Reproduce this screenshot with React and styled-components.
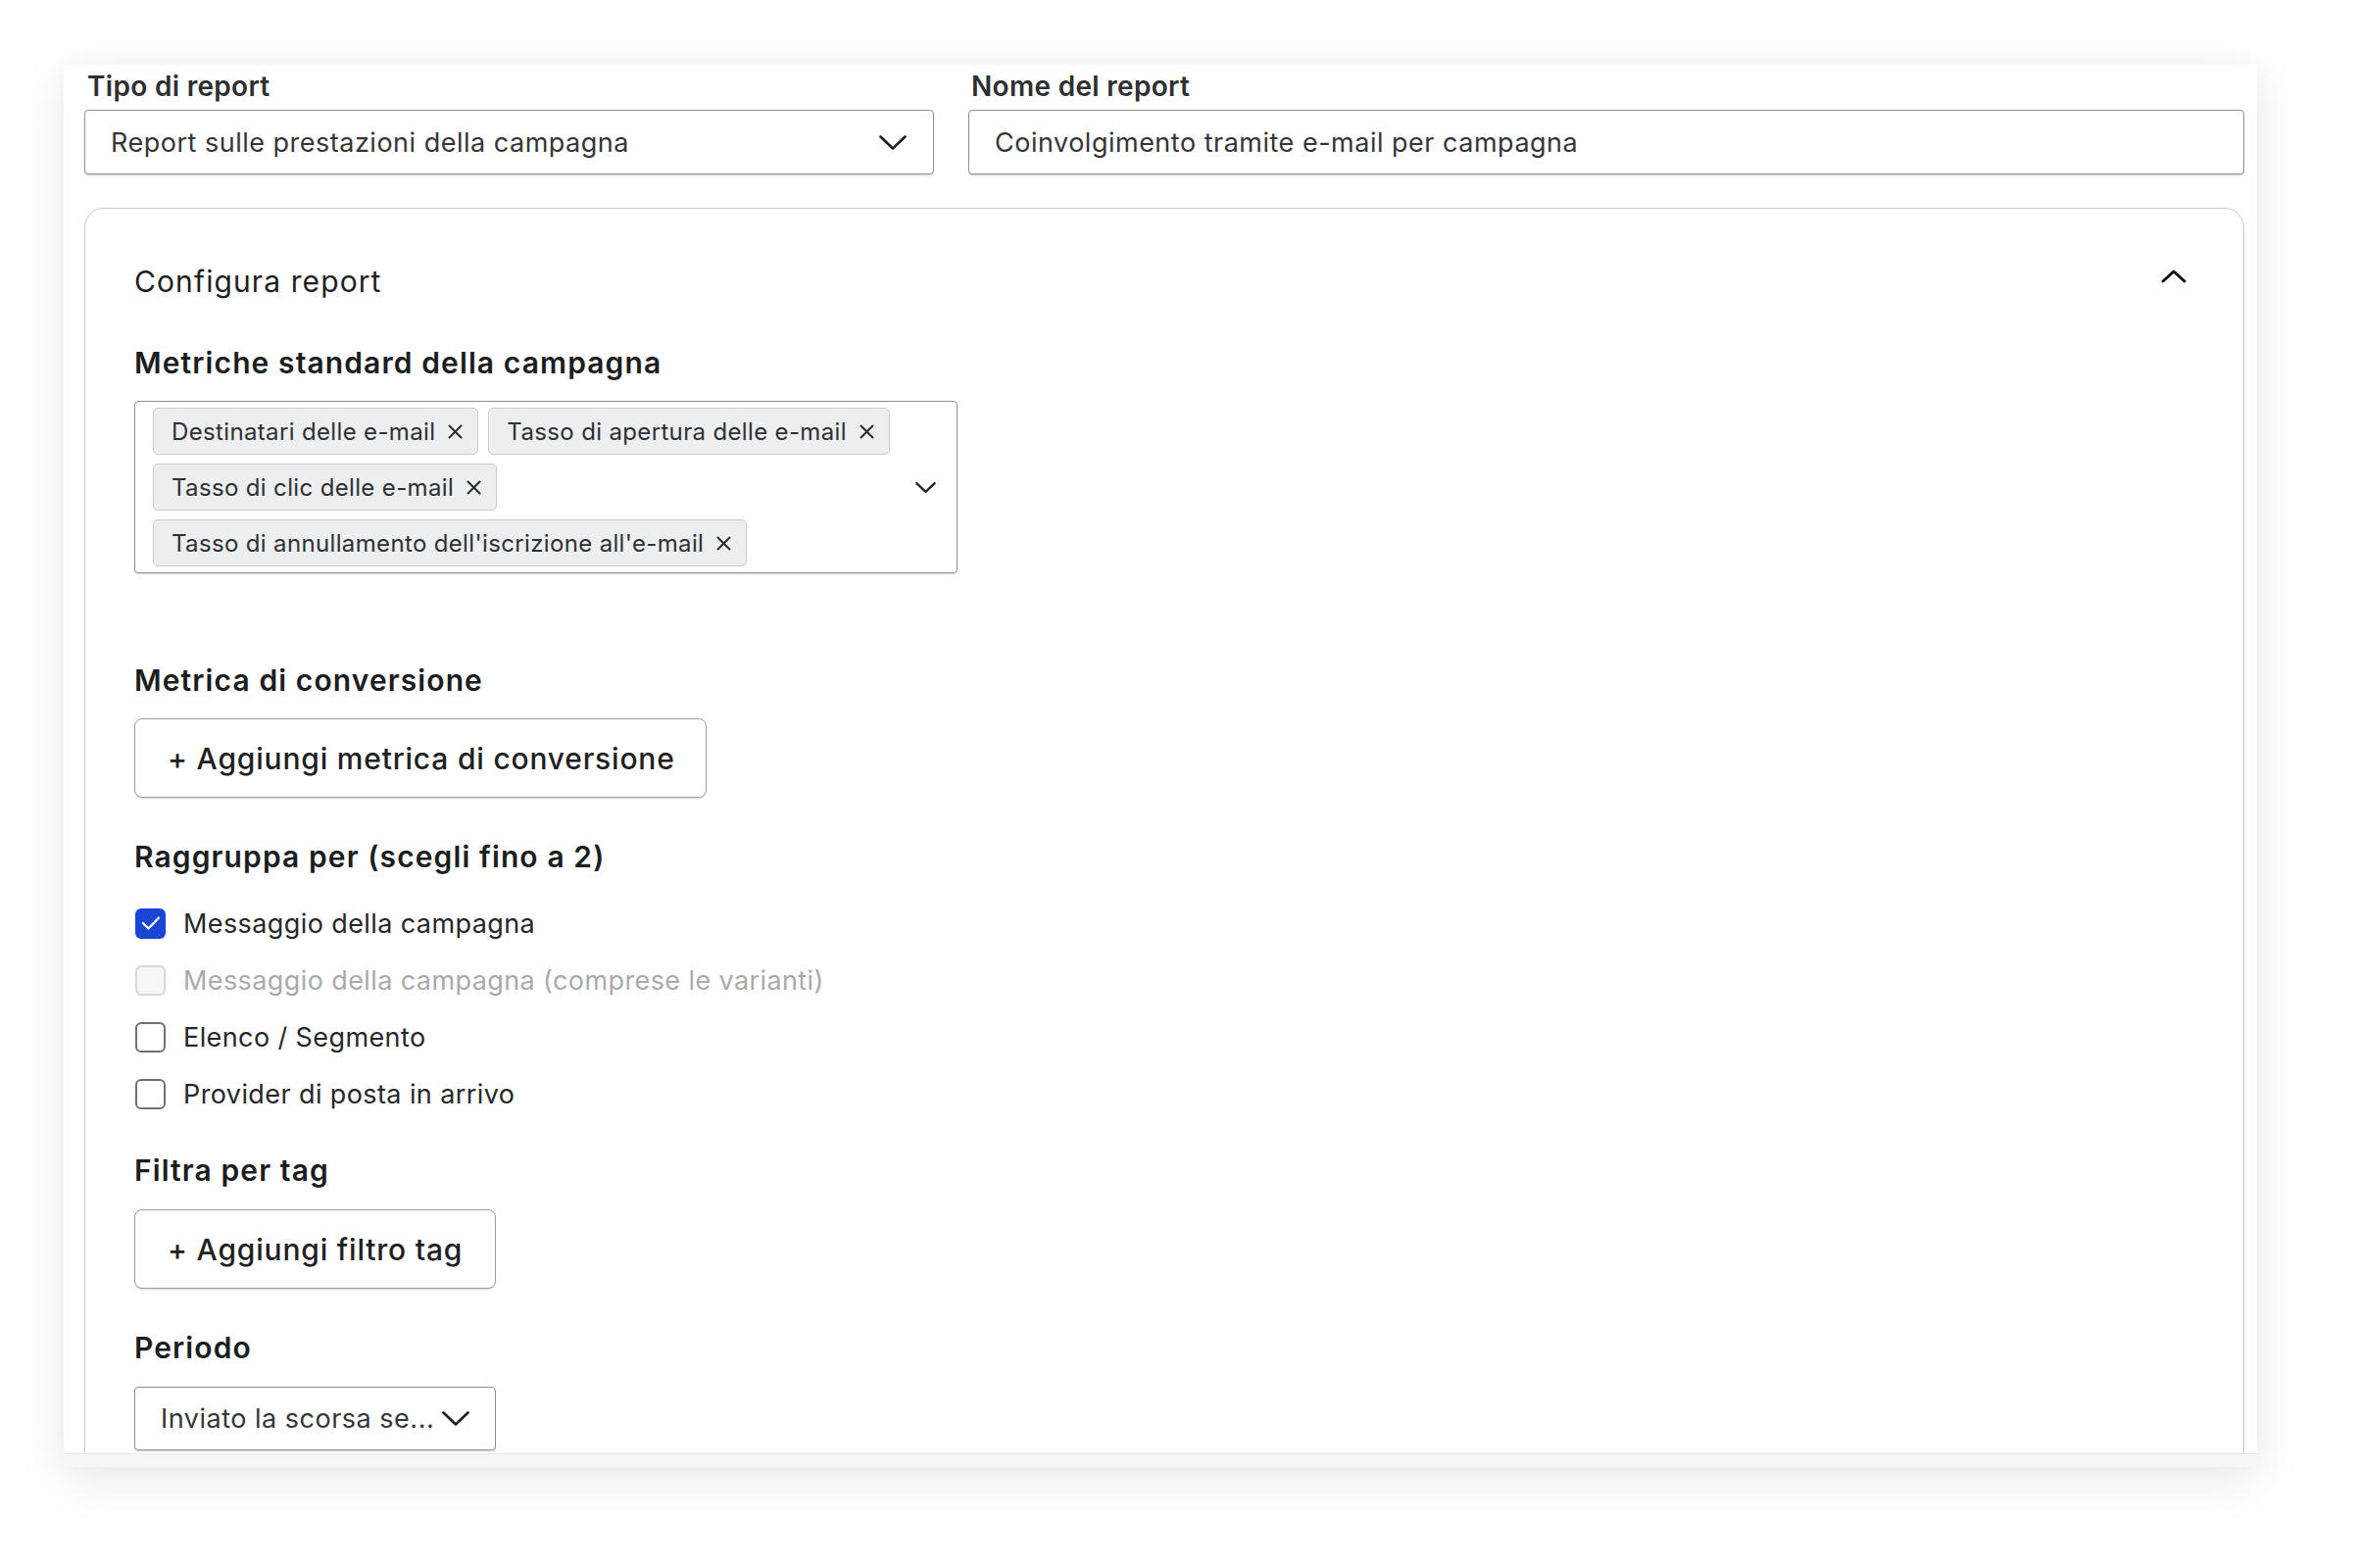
import React from "react";
import styled, { createGlobalStyle } from "styled-components";

const GlobalStyle = createGlobalStyle`
  html, body { margin: 0; padding: 0; background: #ffffff; }
  body { font-family: Inter, "Noto Sans", "Liberation Sans", sans-serif; color: #1f1f1f; }
  * { box-sizing: border-box; }
`;

const Page = styled.div`
  width: 2405px;
  height: 1600px;
  padding: 66px 0 0 65px;
  background: #ffffff;
`;

const Card = styled.div`
  width: 2238px;
  display: flex;
  flex-direction: column;
  background: #ffffff;
  box-shadow: 0 12px 48px rgba(0, 0, 0, 0.085), 0 0 18px rgba(0, 0, 0, 0.03);
`;

const CardBody = styled.div`
  height: 1417px;
  overflow: hidden;
  padding: 5px 13px 0 21px;
`;

const CardFooter = styled.div`
  height: 14px;
  background: #f4f6f7;
  border-top: 1px solid #e4e6e8;
`;

const TopRow = styled.div`
  display: grid;
  grid-template-columns: 867px 1fr;
  column-gap: 35px;
`;

const Field = styled.div`
  display: flex;
  flex-direction: column;
  gap: 7px;
`;

const FieldLabel = styled.label`
  font-size: 28px;
  line-height: 34px;
  font-weight: 600;
  letter-spacing: 0.3px;
  color: #2e2f31;
  padding-left: 3px;
`;

const Box = styled.div`
  height: ${(p) => p.$h || 66}px;
  width: ${(p) => (p.$w ? `${p.$w}px` : "auto")};
  margin-top: ${(p) => p.$mt || 0}px;
  border: 1.5px solid #8e8f91;
  border-radius: 4px;
  box-shadow: 0 1.5px 0 rgba(0, 0, 0, 0.13);
  display: flex;
  align-items: center;
  justify-content: space-between;
  padding: 0 ${(p) => p.$pr || 27}px 0 26px;
  font-size: 27px;
  letter-spacing: 0.5px;
  color: #353638;
  background: #fff;
  white-space: nowrap;
`;

const Panel = styled.div`
  margin-top: 34px;
  height: 1400px;
  border: 1.5px solid #c9cbce;
  border-radius: 20px;
  padding: 57px 57px 0 50px;
`;

const PanelHeader = styled.div`
  display: flex;
  justify-content: space-between;
  align-items: flex-start;
`;

const PanelTitle = styled.h2`
  margin: 0;
  font-size: 30px;
  line-height: 34px;
  font-weight: 400;
  letter-spacing: 1.1px;
  color: #1e1f21;
`;

const Toggle = styled.span`
  display: flex;
  padding-top: 5px;
  padding-right: 1px;
`;

const Heading = styled.h3`
  margin: ${(p) => p.$mt}px 0 0;
  font-size: 30px;
  line-height: 34px;
  font-weight: 600;
  letter-spacing: 1.1px;
  color: #1c1d1f;
`;

const Multi = styled.div`
  width: 840px;
  margin-top: 22px;
  border: 1.5px solid #8e8f91;
  border-radius: 4px;
  box-shadow: 0 1.5px 0 rgba(0, 0, 0, 0.1);
  display: flex;
  align-items: center;
  padding: 6px 0 6px 18px;
`;

const TagList = styled.div`
  flex: 1;
  display: flex;
  flex-wrap: wrap;
  gap: 9px 10px;
`;

const Tag = styled.span`
  height: 48px;
  display: inline-flex;
  align-items: center;
  gap: 13px;
  padding: 0 15px 0 18px;
  background: #eceef0;
  border: 1px solid #cbcdd0;
  border-radius: 5px;
  font-size: 24px;
  letter-spacing: 0.35px;
  color: #2f3032;
  white-space: nowrap;
`;

const MultiChevron = styled.span`
  width: 54px;
  display: flex;
  justify-content: center;
  padding-right: 10px;
`;

const AddButton = styled.button`
  display: block;
  margin-top: ${(p) => p.$mt || 22}px;
  width: ${(p) => p.$w}px;
  height: 81px;
  border: 1.5px solid #9b9c9e;
  border-radius: 8px;
  box-shadow: 0 1.5px 0 rgba(0, 0, 0, 0.1);
  background: #fff;
  text-align: left;
  padding: 0 0 0 33px;
  font-family: inherit;
  font-size: 30px;
  font-weight: 500;
  letter-spacing: 0.8px;
  color: #1f2022;
  white-space: nowrap;
`;

const CheckList = styled.div`
  margin-top: 22px;
  display: flex;
  flex-direction: column;
`;

const CheckRow = styled.label`
  height: 58px;
  display: flex;
  align-items: center;
  gap: 18px;
  font-size: 27px;
  letter-spacing: 0.4px;
  color: ${(p) => (p.$disabled ? "#a9aaac" : "#262729")};
`;

const CheckBox = styled.span`
  width: 31px;
  height: 31px;
  margin-left: 1px;
  border-radius: 6px;
  display: flex;
  align-items: center;
  justify-content: center;
  flex: none;
  background: ${(p) => (p.$checked ? "#1a46d6" : p.$disabled ? "#f6f7f8" : "#fff")};
  border: ${(p) =>
    p.$checked ? "none" : p.$disabled ? "2px solid #d6d8da" : "2px solid #6e7073"};
`;

const ChevronDown = ({ w = 28, h = 15, sw = 2.6 }) => (
  <svg width={w} height={h} viewBox="0 0 28 15" fill="none">
    <polyline points="1.5,1.5 14,13.5 26.5,1.5" stroke="#1f1f1f" strokeWidth={sw} strokeLinecap="round" strokeLinejoin="round" />
  </svg>
);

const ChevronUp = () => (
  <svg width="26" height="14" viewBox="0 0 26 14" fill="none">
    <polyline points="2,12 13,2 24,12" stroke="#111" strokeWidth="3" strokeLinecap="round" strokeLinejoin="round" />
  </svg>
);

const Cross = () => (
  <svg width="15" height="15" viewBox="0 0 15 15" fill="none">
    <path d="M1.5 1.5 L13.5 13.5 M13.5 1.5 L1.5 13.5" stroke="#2a2a2a" strokeWidth="2" strokeLinecap="round" />
  </svg>
);

const Check = () => (
  <svg width="20" height="16" viewBox="0 0 20 16" fill="none">
    <polyline points="2,8 7.5,13.5 18,2.5" stroke="#fff" strokeWidth="2.4" strokeLinecap="round" strokeLinejoin="round" />
  </svg>
);

const tags = [
  "Destinatari delle e-mail",
  "Tasso di apertura delle e-mail",
  "Tasso di clic delle e-mail",
  "Tasso di annullamento dell'iscrizione all'e-mail",
];

const groups = [
  { label: "Messaggio della campagna", checked: true },
  { label: "Messaggio della campagna (comprese le varianti)", disabled: true },
  { label: "Elenco / Segmento" },
  { label: "Provider di posta in arrivo" },
];

export default function App() {
  return (
    <>
      <GlobalStyle />
      <Page>
        <Card>
          <CardBody>
            <TopRow>
              <Field>
                <FieldLabel>Tipo di report</FieldLabel>
                <Box>
                  <span>Report sulle prestazioni della campagna</span>
                  <ChevronDown />
                </Box>
              </Field>
              <Field>
                <FieldLabel>Nome del report</FieldLabel>
                <Box>
                  <span>Coinvolgimento tramite e-mail per campagna</span>
                </Box>
              </Field>
            </TopRow>

            <Panel>
              <PanelHeader>
                <PanelTitle>Configura report</PanelTitle>
                <Toggle>
                  <ChevronUp />
                </Toggle>
              </PanelHeader>

              <Heading $mt={49}>Metriche standard della campagna</Heading>
              <Multi>
                <TagList>
                  {tags.map((t) => (
                    <Tag key={t}>
                      {t}
                      <Cross />
                    </Tag>
                  ))}
                </TagList>
                <MultiChevron>
                  <ChevronDown w={21} h={11} sw={3} />
                </MultiChevron>
              </Multi>

              <Heading $mt={92}>Metrica di conversione</Heading>
              <AddButton $w={584}>+ Aggiungi metrica di conversione</AddButton>

              <Heading $mt={43}>Raggruppa per (scegli fino a 2)</Heading>
              <CheckList>
                {groups.map((g) => (
                  <CheckRow key={g.label} $disabled={g.disabled}>
                    <CheckBox $checked={g.checked} $disabled={g.disabled}>
                      {g.checked && <Check />}
                    </CheckBox>
                    {g.label}
                  </CheckRow>
                ))}
              </CheckList>

              <Heading $mt={32}>Filtra per tag</Heading>
              <AddButton $w={369} $mt={23}>+ Aggiungi filtro tag</AddButton>

              <Heading $mt={43}>Periodo</Heading>
              <Box $w={369} $h={65} $mt={23} $pr={26}>
                <span>Inviato la scorsa se...</span>
                <ChevronDown />
              </Box>
            </Panel>
          </CardBody>
          <CardFooter />
        </Card>
      </Page>
    </>
  );
}
